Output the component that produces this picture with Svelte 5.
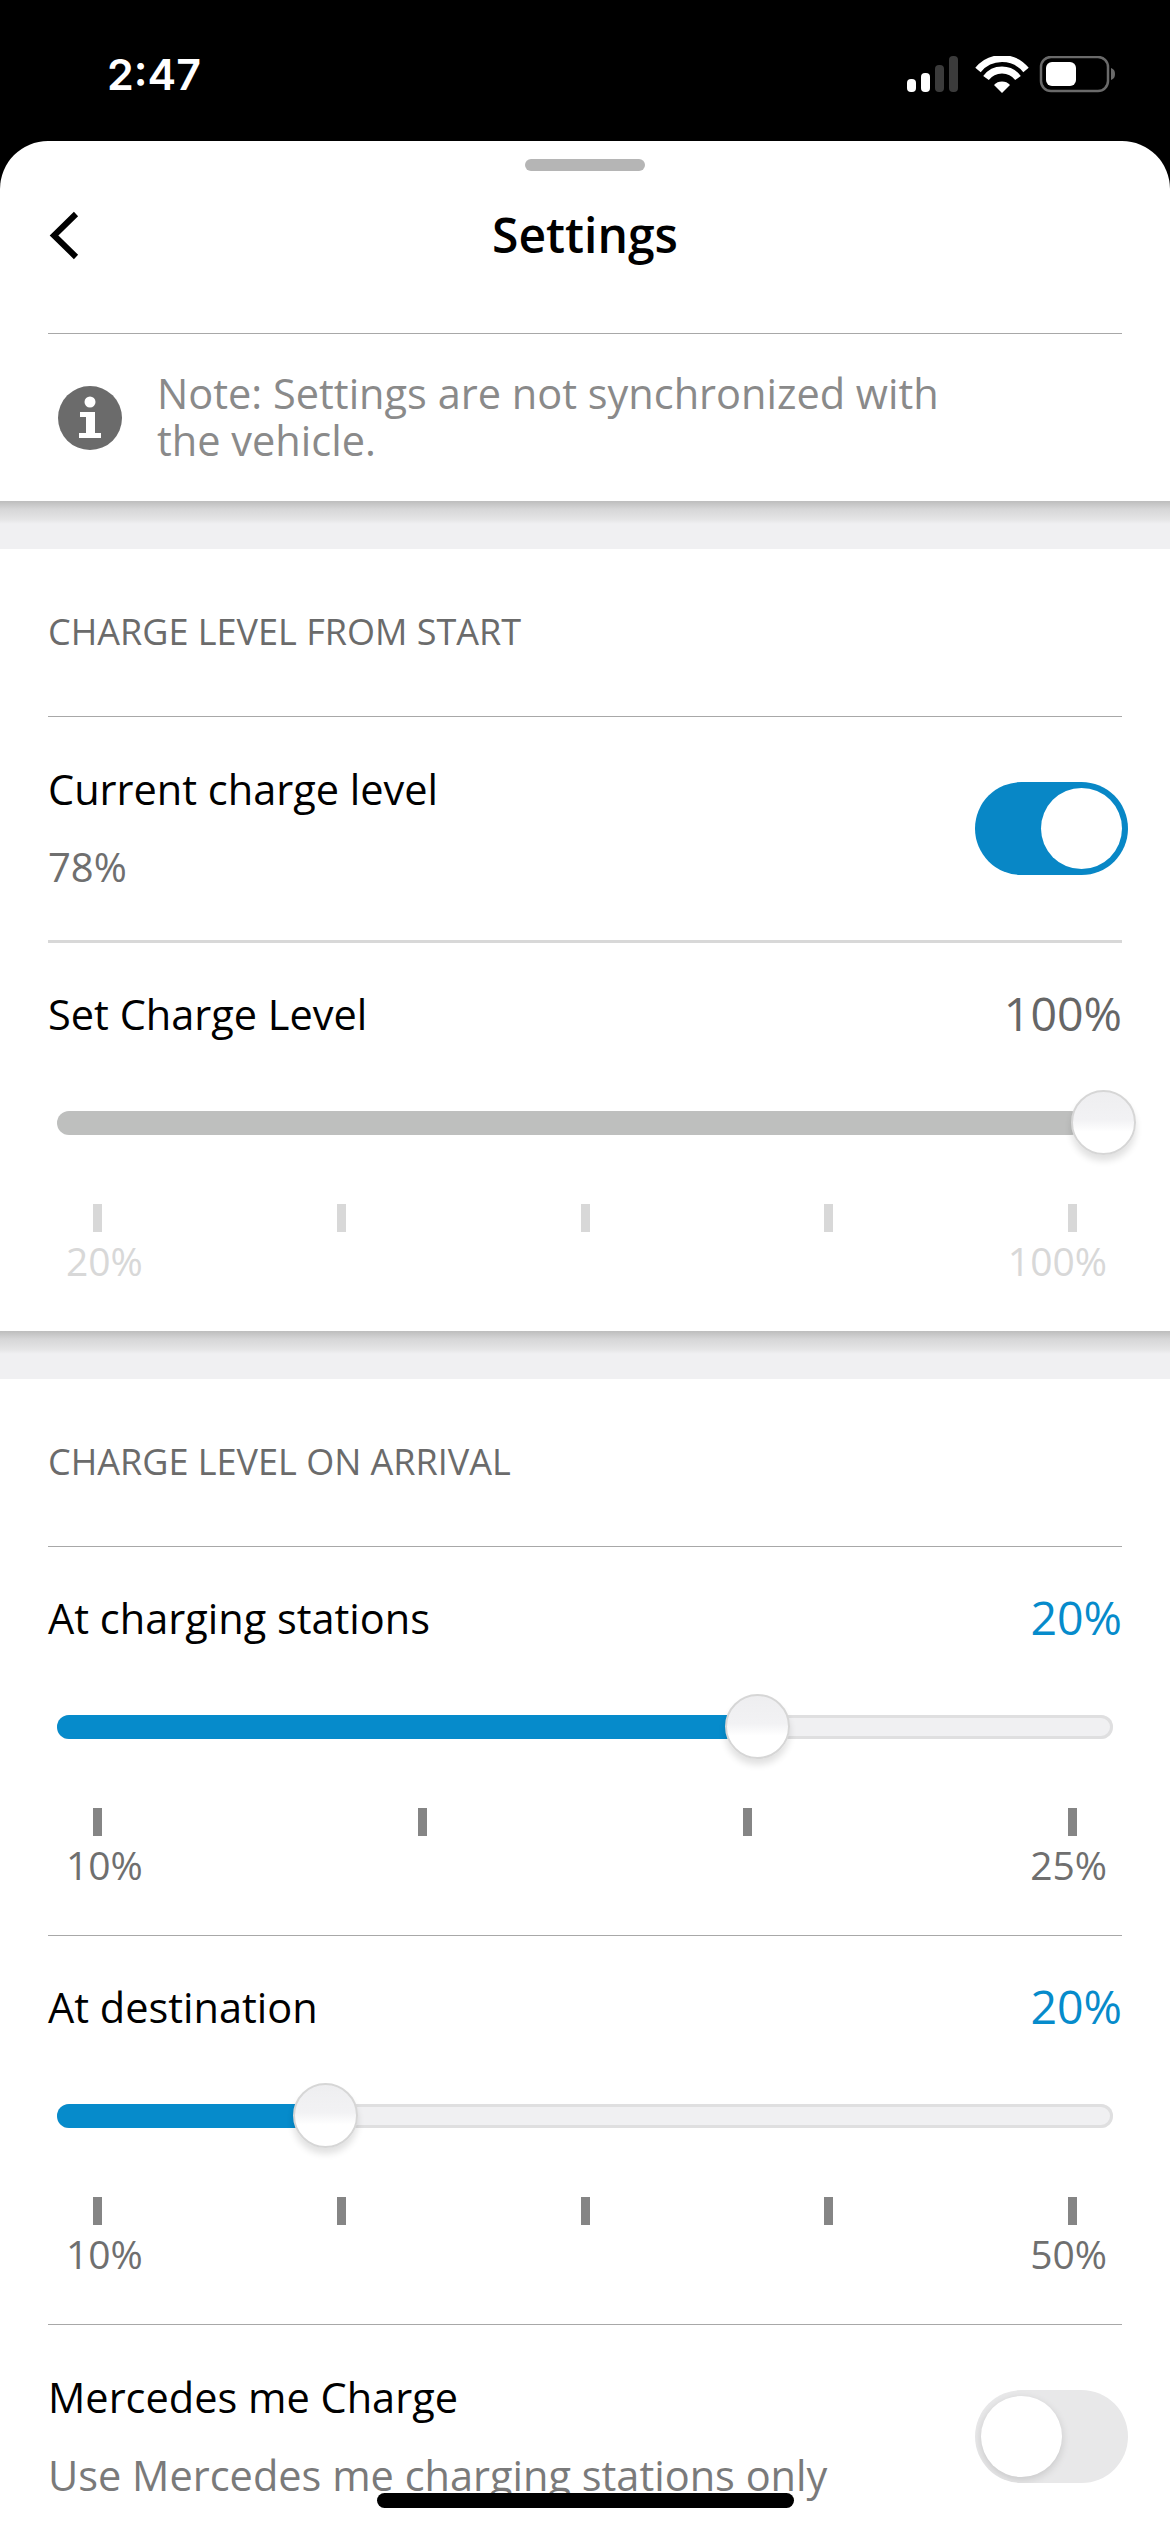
<script>
  const blue = '#068bcb';
  const ticksFive = [0, 1, 2, 3, 4];
  const ticksFour = [0, 1, 2, 3];
</script>

<div class="screen">
  <div class="status">
    <span class="time">2:47</span>
    <svg class="status-icons" width="208" height="37" viewBox="0 0 208 37">
      <rect x="0" y="23" width="9" height="13" rx="4" fill="#fff" />
      <rect x="14" y="17" width="9" height="19" rx="4" fill="#fff" />
      <rect x="28" y="9" width="9" height="27" rx="4" fill="#3b3b3b" />
      <rect x="42" y="0" width="9" height="36" rx="4" fill="#3b3b3b" />
      <path d="M71 14a31 31 0 0 1 48 0M79 22a20 20 0 0 1 32 0" fill="none" stroke="#fff" stroke-width="7" />
      <path d="M87 29a11 11 0 0 1 16 0l-8 8z" fill="#fff" />
      <rect x="134" y="1" width="67" height="34" rx="10" fill="none" stroke="#6a6a6a" stroke-width="2.500" />
      <rect x="139" y="6" width="30" height="24" rx="6" fill="#fff" />
      <path d="M204 12c3 1 4 3 4 6s-1 5-4 6z" fill="#6a6a6a" />
    </svg>
  </div>

  <div class="sheet">
    <header class="header">
      <div class="handle"></div>
      <div class="title-row">
        <svg class="back" width="32" height="50" viewBox="0 0 32 50">
          <path d="M28 3L6 24.500L28 46" fill="none" stroke="#000" stroke-width="6" />
        </svg>
        <h1>Settings</h1>
      </div>
    </header>

    <div class="note">
      <svg width="64" height="64" viewBox="0 0 64 64">
        <circle cx="32" cy="32" r="32" fill="#6b6b6b" />
        <circle cx="32" cy="16" r="5.500" fill="#fff" />
        <path d="M22 26h15v21h6v5H21v-5h7V31h-6z" fill="#fff" />
      </svg>
      <p>Note: Settings are not synchronized with<br />the vehicle.</p>
    </div>

    <div class="band"></div>

    <section>
      <h2>CHARGE LEVEL FROM START</h2>
      <div class="toggle-row rule-light">
        <div class="toggle-text">
          <div class="label">Current charge level</div>
          <div class="sub pct">78%</div>
        </div>
        <div class="toggle on"><div class="toggle-knob"></div></div>
      </div>

      <div class="slider-row">
        <div class="slider-head">
          <span class="label">Set Charge Level</span>
          <span class="value grey">100%</span>
        </div>
        <div class="slider">
          <div class="track full"></div>
          <div class="knob" style="left: 1014px"></div>
        </div>
        <div class="ticks faint">
          {#each ticksFive as t (t)}<i></i>{/each}
        </div>
        <div class="range faint">
          <span>20%</span><span>100%</span>
        </div>
      </div>
    </section>

    <div class="band"></div>

    <section>
      <h2>CHARGE LEVEL ON ARRIVAL</h2>
      <div class="slider-row rule">
        <div class="slider-head">
          <span class="label">At charging stations</span>
          <span class="value" style="color: {blue}">20%</span>
        </div>
        <div class="slider">
          <div class="track"><div class="fill" style="width: 680px"></div></div>
          <div class="knob" style="left: 668px"></div>
        </div>
        <div class="ticks">
          {#each ticksFour as t (t)}<i></i>{/each}
        </div>
        <div class="range">
          <span>10%</span><span>25%</span>
        </div>
      </div>
      <div class="slider-row rule">
        <div class="slider-head">
          <span class="label">At destination</span>
          <span class="value" style="color: {blue}">20%</span>
        </div>
        <div class="slider">
          <div class="track"><div class="fill" style="width: 250px"></div></div>
          <div class="knob" style="left: 236px"></div>
        </div>
        <div class="ticks">
          {#each ticksFive as t (t)}<i></i>{/each}
        </div>
        <div class="range">
          <span>10%</span><span>50%</span>
        </div>
      </div>
      <div class="toggle-row">
        <div class="toggle-text">
          <div class="label">Mercedes me Charge</div>
          <div class="sub">Use Mercedes me charging stations only</div>
        </div>
        <div class="toggle off"><div class="toggle-knob"></div></div>
      </div>
    </section>
  </div>

  <div class="home"></div>
</div>

<style>
  :global(body) {
    margin: 0;
    background: #000;
  }
  .screen {
    position: relative;
    width: 1170px;
    height: 2532px;
    overflow: hidden;
    background: #000;
    font-family: "Open Sans", "Noto Sans", sans-serif;
  }
  .status {
    height: 141px;
    display: flex;
    justify-content: space-between;
    align-items: flex-start;
    box-sizing: border-box;
    padding: 0 55px 0 107px;
    color: #fff;
  }
  .time {
    margin-top: 48px;
    font: 600 43px/52px "Inter", sans-serif;
  }
  .status-icons {
    margin-top: 56px;
  }
  .sheet {
    background: #fff;
    border-radius: 48px 48px 0 0;
  }
  .header {
    height: 192px;
    margin: 0 48px;
    border-bottom: 1px solid #a8a8a8;
    position: relative;
  }
  .handle {
    position: absolute;
    top: 18px;
    left: 477px;
    width: 120px;
    height: 12px;
    border-radius: 6px;
    background: #b5b5b5;
  }
  .title-row {
    display: flex;
    align-items: center;
    justify-content: center;
    position: relative;
    padding-top: 64px;
    height: 60px;
  }
  .back {
    position: absolute;
    left: 0;
    top: 70px;
  }
  h1 {
    margin: 0;
    font-size: 48px;
    line-height: 60px;
    font-weight: 600;
    color: #000;
  }
  .note {
    height: 165px;
    padding-bottom: 2px;
    display: flex;
    align-items: center;
    padding-left: 58px;
    gap: 35px;
  }
  .note svg {
    margin-top: 2px;
  }
  .note p {
    margin: 0;
    font-size: 41.500px;
    line-height: 47px;
    color: #8a8a8a;
  }
  .band {
    height: 48px;
    background: linear-gradient(#bdbdbd 0, #d6d6d7 8px, #e4e4e5 18px, #f0f0f2 23px);
  }
  section {
    padding: 0 48px;
    background: #fff;
  }
  h2 {
    margin: 0;
    line-height: 165px;
    font-size: 36px;
    font-weight: 500;
    color: #6b6b6b;
    border-bottom: 1px solid #a8a8a8;
    box-sizing: border-box;
    height: 168px;
  }
  .toggle-row {
    height: 223px;
    display: flex;
    justify-content: space-between;
    align-items: center;
    margin-right: -6px;
  }
  .toggle-row.rule-light {
    margin-right: 0;
    border-bottom: 3px solid #d8d8d8;
  }
  .toggle-text {
    display: flex;
    flex-direction: column;
    gap: 28px;
    margin-top: -1px;
  }
  .label {
    font-size: 41.500px;
    line-height: 50px;
    color: #000;
  }
  .slider-head .label {
    display: block;
  }
  .sub {
    font-size: 41.500px;
    line-height: 50px;
    color: #7a7a7a;
    white-space: nowrap;
  }
  .sub.pct {
    font-size: 40px;
    color: #6f6f6f;
  }
  .toggle {
    position: relative;
    width: 153px;
    height: 93px;
    border-radius: 47px;
    flex: none;
    overflow: hidden;
  }
  .rule-light .toggle {
    margin-right: -6px;
  }
  .toggle.on {
    background: #0887c6;
  }
  .toggle.off {
    background: #e8e8e9;
  }
  .toggle-knob {
    position: absolute;
    top: 6px;
    width: 81px;
    height: 81px;
    border-radius: 50%;
    background: #fff;
  }
  .on .toggle-knob {
    right: 6px;
  }
  .off .toggle-knob {
    left: 6px;
    box-shadow: 0 3px 8px rgba(0, 0, 0, 0.14);
  }
  .slider-row {
    height: 388px;
    box-sizing: border-box;
    padding-top: 46px;
  }
  .slider-row.rule {
    height: 389px;
    border-bottom: 1px solid #a8a8a8;
  }
  .slider-head {
    display: flex;
    justify-content: space-between;
    height: 50px;
  }
  .value {
    font-size: 46.500px;
    line-height: 50px;
    font-weight: 500;
    margin-top: -1px;
  }
  .value.grey {
    color: #666;
  }
  .slider {
    position: relative;
    margin: 51px 9px 0 9px;
    height: 65px;
  }
  .track {
    position: absolute;
    left: 0;
    right: 0;
    top: 21px;
    height: 24px;
    border-radius: 12px;
    background: #f0f0f2;
    box-shadow: inset 0 0 0 3px #dfdfe0;
    overflow: hidden;
  }
  .track.full {
    right: 30px;
    background: #bebfbe;
    box-shadow: none;
  }
  .fill {
    height: 100%;
    background: #068bcb;
  }
  .knob {
    position: absolute;
    top: 0;
    width: 65px;
    height: 65px;
    border-radius: 50%;
    background: linear-gradient(#eeeef0 0, #f2f2f4 45%, #fff 65%);
    border: 2px solid #d6d6d6;
    box-sizing: border-box;
    box-shadow: 0 6px 7px rgba(0, 0, 0, 0.12);
  }
  .ticks {
    display: flex;
    justify-content: space-between;
    margin: 49px 45px 0;
  }
  .ticks i {
    width: 9px;
    height: 28px;
    background: #858585;
  }
  .ticks.faint i {
    background: #d8d8d8;
  }
  .range {
    display: flex;
    justify-content: space-between;
    padding: 0 15px 0 18px;
    margin-top: 7px;
    font-size: 39px;
    line-height: 44px;
    color: #6f6f6f;
  }
  .range.faint {
    color: #d8d8d8;
  }
  .home {
    position: absolute;
    left: 377px;
    top: 2493px;
    width: 417px;
    height: 15px;
    border-radius: 8px;
    background: #000;
  }
</style>
